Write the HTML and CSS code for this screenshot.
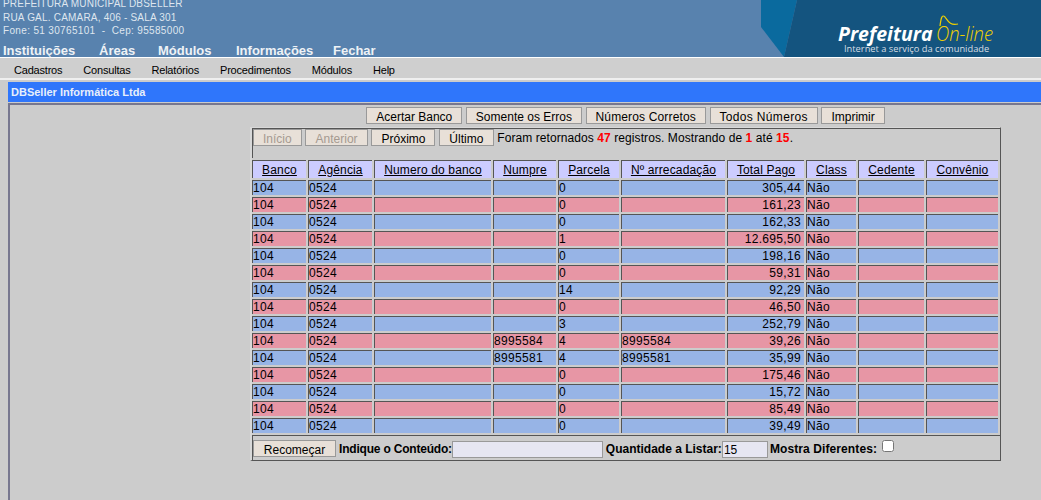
FILE: index.html
```html
<!DOCTYPE HTML>
<html>
  <head>
    <meta http-equiv="Content-type" content="text/html;charset=UTF-8">
    <title>DBSeller</title>
    <link rel="stylesheet" href="styles.css">
  </head>
  <body>
    <div class="topo">
      <div class="topo-texto">
        <div class="endereco">
          <div>PREFEITURA MUNICIPAL DBSELLER</div>
          <div>RUA GAL. CAMARA, 406 - SALA 301</div>
          <div class="fone">Fone: 51 30765101 &nbsp;-&nbsp; Cep: 95585000</div>
        </div>
        <div class="menu1">
          <span class="m-inst">Instituições</span>
          <span class="m-areas">Áreas</span>
          <span class="m-mod">Módulos</span>
          <span class="m-info">Informações</span>
          <span>Fechar</span>
        </div>
      </div>
      <svg class="logo" width="280" height="57" viewBox="0 0 280 57">
        <polygon points="0,0 36,0 23,57 23,57 0,27" fill="#0a6a9e"/>
        <polygon points="36,0 280,0 280,57 23,57" fill="#14547f"/>
        <text x="77" y="41" class="logo-pref">Prefeitura</text>
        <text x="175" y="41" class="logo-on" textLength="57" lengthAdjust="spacingAndGlyphs">On-line</text>
        <path d="M179 26C180 18 181 14 184 17C187 21 189 26 197 24" fill="none" stroke="#f0d000" stroke-width="1.2"/>
        <text x="83" y="52" class="logo-sub">Internet a serviço da comunidade</text>
      </svg>
    </div>
    <div class="menu2">
      <span>Cadastros</span>
      <span>Consultas</span>
      <span>Relatórios</span>
      <span>Procedimentos</span>
      <span>Módulos</span>
      <span>Help</span>
    </div>
    <div class="titulo">DBSeller Informática Ltda</div>
    <div class="conteudo">
      <div class="coluna">
        <div class="acoes">
          <button class="btn">Acertar Banco</button>
          <button class="btn">Somente os Erros</button>
          <button class="btn b-num">Números Corretos</button>
          <button class="btn b-todos">Todos Números</button>
          <button class="btn">Imprimir</button>
        </div>
        <div class="quadro">
          <div class="paginacao">
            <button class="btn" disabled>Início</button>
            <button class="btn b-ant" disabled>Anterior</button>
            <button class="btn">Próximo</button>
            <button class="btn b-ult">Último</button>
            <span class="info">Foram retornados <b>47</b> registros. Mostrando de <b>1</b> até <b>15</b>.</span>
          </div>
          <table class="dados">
            <colgroup>
              <col class="c1"><col class="c2"><col class="c3"><col class="c4"><col class="c5">
              <col class="c6"><col class="c7"><col class="c8"><col class="c9"><col class="c10">
            </colgroup>
            <thead>
              <tr>
                <th>Banco</th><th>Agência</th><th>Numero do banco</th><th>Numpre</th><th>Parcela</th>
                <th>Nº arrecadação</th><th>Total Pago</th><th>Class</th><th>Cedente</th><th>Convênio</th>
              </tr>
            </thead>
            <tbody>
              <tr class="az"><td>104</td><td>0524</td><td></td><td></td><td>0</td><td></td><td class="v">305,44</td><td>Não</td><td></td><td></td></tr>
              <tr class="rs"><td>104</td><td>0524</td><td></td><td></td><td>0</td><td></td><td class="v">161,23</td><td>Não</td><td></td><td></td></tr>
              <tr class="az"><td>104</td><td>0524</td><td></td><td></td><td>0</td><td></td><td class="v">162,33</td><td>Não</td><td></td><td></td></tr>
              <tr class="rs"><td>104</td><td>0524</td><td></td><td></td><td>1</td><td></td><td class="v">12.695,50</td><td>Não</td><td></td><td></td></tr>
              <tr class="az"><td>104</td><td>0524</td><td></td><td></td><td>0</td><td></td><td class="v">198,16</td><td>Não</td><td></td><td></td></tr>
              <tr class="rs"><td>104</td><td>0524</td><td></td><td></td><td>0</td><td></td><td class="v">59,31</td><td>Não</td><td></td><td></td></tr>
              <tr class="az"><td>104</td><td>0524</td><td></td><td></td><td>14</td><td></td><td class="v">92,29</td><td>Não</td><td></td><td></td></tr>
              <tr class="rs"><td>104</td><td>0524</td><td></td><td></td><td>0</td><td></td><td class="v">46,50</td><td>Não</td><td></td><td></td></tr>
              <tr class="az"><td>104</td><td>0524</td><td></td><td></td><td>3</td><td></td><td class="v">252,79</td><td>Não</td><td></td><td></td></tr>
              <tr class="rs"><td>104</td><td>0524</td><td></td><td>8995584</td><td>4</td><td>8995584</td><td class="v">39,26</td><td>Não</td><td></td><td></td></tr>
              <tr class="az"><td>104</td><td>0524</td><td></td><td>8995581</td><td>4</td><td>8995581</td><td class="v">35,99</td><td>Não</td><td></td><td></td></tr>
              <tr class="rs"><td>104</td><td>0524</td><td></td><td></td><td>0</td><td></td><td class="v">175,46</td><td>Não</td><td></td><td></td></tr>
              <tr class="az"><td>104</td><td>0524</td><td></td><td></td><td>0</td><td></td><td class="v">15,72</td><td>Não</td><td></td><td></td></tr>
              <tr class="rs"><td>104</td><td>0524</td><td></td><td></td><td>0</td><td></td><td class="v">85,49</td><td>Não</td><td></td><td></td></tr>
              <tr class="az"><td>104</td><td>0524</td><td></td><td></td><td>0</td><td></td><td class="v">39,49</td><td>Não</td><td></td><td></td></tr>
            </tbody>
          </table>
          <div class="filtro">
            <button class="btn btn-recomecar">Recomeçar</button>
            <label class="lb lb-cont">Indique o Conteúdo:</label><input class="campo campo-cont" type="text">
            <label class="lb">Quantidade a Listar:</label><input class="campo campo-qt" type="text" value="15">
            <label class="lb lb-dif">Mostra Diferentes:</label><input class="marca" type="checkbox">
          </div>
        </div>
      </div>
    </div>
  </body>
</html>
```

FILE: styles.css
```css
html, body {
  margin: 0;
  height: 500px;
  overflow: hidden;
  background: #cccccc;
  font-family: "Liberation Sans", Arial, sans-serif;
  font-size: 12px;
  color: #000;
}
.topo {
  height: 57px;
  background: #5882ae;
  display: flex;
  justify-content: space-between;
  border-bottom: 1px solid #fff;
}
.topo-texto {
  padding-left: 3px;
}
.endereco {
  height: 46px;
  margin-top: -3px;
  font-size: 10px;
  line-height: 13.5px;
  letter-spacing: 0.2px;
  color: #dfe6ee;
}
.fone {
  letter-spacing: 0.34px;
}
.menu1 {
  display: flex;
  font-weight: bold;
  font-size: 13px;
  line-height: 15px;
  color: #eef2f6;
}
.m-inst { width: 96px; }
.m-areas { width: 59px; }
.m-mod { width: 78px; }
.m-info { width: 97px; }
.logo-pref {
  font-family: "Open Sans", sans-serif;
  font-size: 19.5px;
  font-weight: bold;
  font-style: italic;
  fill: #fff;
}
.logo-on {
  font-family: "Open Sans", sans-serif;
  font-size: 21px;
  font-weight: 300;
  font-style: italic;
  fill: #f0d000;
}
.logo-sub {
  font-family: "Open Sans", sans-serif;
  font-size: 9.3px;
  fill: #d6dde4;
}
.menu2 {
  height: 20px;
  display: flex;
  gap: 21px;
  padding-left: 14px;
  font-size: 11px;
  line-height: 24px;
  letter-spacing: -0.2px;
  border-bottom: 2px solid #efefef;
  background: #cfcfcf;
}
.titulo {
  margin: 2px 0 0 8px;
  height: 20px;
  padding-left: 3px;
  background: #2f76fb;
  color: #e8effa;
  font-size: 11px;
  font-weight: bold;
  line-height: 20px;
}
.conteudo {
  margin: 1px 0 0 8px;
  height: 400px;
  border-top: 2px solid #77778f;
  border-left: 2px solid #77778f;
}
.coluna {
  width: 751px;
  margin-left: 240px;
}
.acoes {
  display: flex;
  justify-content: center;
  gap: 3.6px;
  padding-top: 2px;
}
.btn {
  height: 17px;
  padding: 2px 9px 0;
  background: #e8e0d8;
  border: 1px solid #999;
  color: #000;
  font-family: "Liberation Sans", Arial, sans-serif;
  font-size: 12px;
  line-height: 14px;
}
.btn:disabled {
  color: #a59a90;
}
.b-num { letter-spacing: 0.15px; }
.b-todos { letter-spacing: 0.33px; }
.b-ant { width: 63px; }
.b-ult { width: 55px; }
.quadro {
  margin-top: 3px;
  border-style: solid;
  border-width: 1px 1px 1px 2px;
  border-color: #d8d8d8 #555 #555 #d8d8d8;
  height: 332px;
}
.paginacao {
  display: flex;
  gap: 3.4px;
  height: 29px;
  border-top: 1px solid #555;
  border-left: 1px solid #555;
}
.info {
  line-height: 19px;
  letter-spacing: 0.08px;
}
.info b {
  color: #f00;
}
.dados {
  table-layout: fixed;
  width: 750px;
  border-collapse: separate;
  border-spacing: 2px;
  margin-left: -2px;
}
.c1 { width: 54px; }
.c2 { width: 64px; }
.c3 { width: 117px; }
.c4 { width: 63px; }
.c5 { width: 61px; }
.c6 { width: 104px; }
.c7 { width: 77px; }
.c8 { width: 50px; }
.c9 { width: 66px; }
.c10 { width: 72px; }
.dados th, .dados td {
  height: 14px;
  padding: 0;
  border-top: 1px solid #555;
  border-left: 1px solid #555;
  font-size: 12px;
  line-height: 14px;
  letter-spacing: 0.33px;
  overflow: hidden;
  white-space: nowrap;
}
.dados th {
  height: 16px;
  padding-top: 1px;
  background: #ccccff;
  font-weight: normal;
  letter-spacing: 0.15px;
  text-decoration: underline;
  text-align: center;
}
.az td { background: #97b4e6; }
.rs td { background: #e796a5; }
.dados td.v {
  text-align: right;
  padding-right: 3px;
}
.filtro {
  display: flex;
  align-items: flex-start;
  height: 25px;
  padding-top: 4px;
  border-top: 1px solid #555;
  border-left: 1px solid #555;
  box-sizing: border-box;
}
.btn-recomecar {
  width: 83px;
}
.lb {
  font-weight: bold;
  line-height: 18px;
  margin-left: 3px;
}
.lb-cont { letter-spacing: -0.2px; }
.campo {
  box-sizing: border-box;
  height: 17px;
  margin: 1px 0 0;
  padding: 0 1px;
  background: #e6e6f2;
  border: 1px solid #999;
  font-family: "Liberation Sans", Arial, sans-serif;
  font-size: 12px;
}
.campo-cont { width: 151px; }
.campo-qt { width: 46px; }
.lb-dif {
  margin-left: 2px;
  margin-right: 5px;
  letter-spacing: 0.1px;
}
.marca {
  width: 12px;
  height: 12px;
  margin: 0;
}
```
